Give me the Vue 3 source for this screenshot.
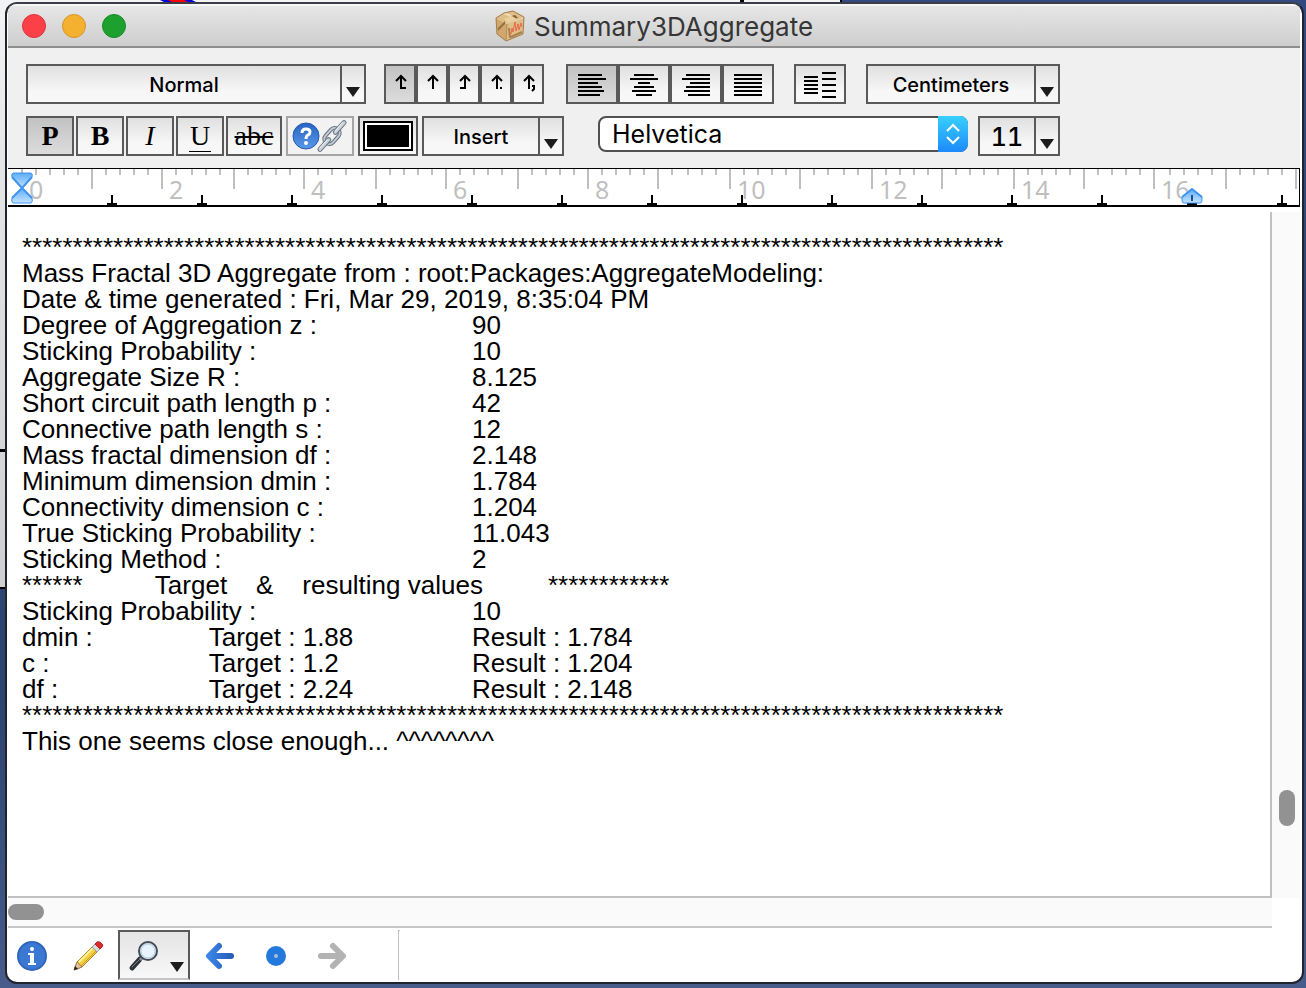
<script setup>
import { ref } from 'vue'

const stars = '*'.repeat(97)
const notes = ref([
  stars,
  'Mass Fractal 3D Aggregate from : root:Packages:AggregateModeling:',
  'Date & time generated : Fri, Mar 29, 2019, 8:35:04 PM',
  'Degree of Aggregation z :\t\t90',
  'Sticking Probability :\t\t\t10',
  'Aggregate Size R :\t\t\t8.125',
  'Short circuit path length p :\t\t42',
  'Connective path length s :\t\t12',
  'Mass fractal dimension df :\t\t2.148',
  'Minimum dimension dmin :\t\t1.784',
  'Connectivity dimension c :\t\t1.204',
  'True Sticking Probability :\t\t11.043',
  'Sticking Method :\t\t\t2',
  '******\t      Target    &    resulting values         ************',
  'Sticking Probability :\t\t\t10',
  'dmin :\t\t Target : 1.88\t\tResult : 1.784',
  'c :\t\t Target : 1.2\t\tResult : 1.204',
  'df :\t\t Target : 2.24\t\tResult : 2.148',
  stars,
  'This one seems close enough... ^^^^^^^^'
].join('\n'))

const tabKinds = [
  { name: 'Left tab', extra: 'M15 22H20' },
  { name: 'Center tab', extra: '' },
  { name: 'Right tab', extra: 'M15 22H10' },
  { name: 'Decimal tab', extra: 'M18 22H20' },
  { name: 'Comma tab', extra: 'M18 20H20V23L18 25' }
]

const alignments = [
  { name: 'Align left', lines: [[10, 24], [10, 28], [10, 20], [10, 24], [10, 26], [10, 22]] },
  { name: 'Align center', lines: [[14, 20], [10, 28], [18, 12], [14, 20], [12, 24], [16, 16]] },
  { name: 'Align right', lines: [[14, 24], [10, 28], [18, 20], [14, 24], [12, 26], [16, 22]] },
  { name: 'Justify', lines: [[10, 28], [10, 28], [10, 28], [10, 28], [10, 28], [10, 28]] }
]

const scale = Array.from({ length: 91 }, (_, i) => ({
  x: 13 + 2 * Math.floor((i * 14.173) / 2),
  major: i % 5 === 0,
  label: i % 10 === 0 && i <= 80 ? String(i / 5) : ''
}))
const stops = Array.from({ length: 14 }, (_, i) => 104 + i * 90)
</script>

<template>
  <div class="desktop">
    <div class="behind" aria-hidden="true">
      <svg class="curve" viewBox="0 0 40 3" width="40" height="3">
        <path d="M2 0H34L40 3H8Z" fill="#00d" /><path d="M10 0H26L32 3H16Z" fill="#f00" />
      </svg>
      <i class="axis"></i><i class="tick"></i>
    </div>
    <main class="window">
      <header class="titlebar">
        <div class="lights">
          <button class="light red" aria-label="Close"></button>
          <button class="light amber" aria-label="Minimize"></button>
          <button class="light green" aria-label="Zoom window"></button>
        </div>
        <svg class="box-icon" viewBox="0 0 30 32" width="30" height="32" aria-hidden="true">
          <path d="M1 8L12 14L11 31L2 24Z" fill="#d0a76c" />
          <path d="M12 14L29 8L28 24L11 31Z" fill="#dfbd85" />
          <path d="M1 8L9 3L18 1L29 7L12 14Z" fill="#e0bd86" />
          <path d="M8 4L18 8L21 7L11 3Z" fill="#f0dcb2" />
          <path d="M16 6L20 5L23 8L18 9Z" fill="#84603a" />
          <path d="M9 9L17 6L22 9L13 13Z" fill="#ecd09c" />
          <path d="M3 18L10 11V14L3 21Z" fill="#94703f" />
          <path d="M14 18L15 28M16 27L27 22" fill="none" stroke="#a8814f" stroke-width="2" />
          <path d="M16 24L17 18L18 22L20 12L21 21L23 14L24 20L26 13L27 17" fill="none" stroke="#e8694a" stroke-width="1" />
          <path d="M1 8L2 24L11 31L28 24L29 7L18 1L9 3Z" fill="none" stroke="#a17c4b" stroke-width="1" />
          <path d="M12 14L11 31" fill="none" stroke="#b28b55" stroke-width="1" />
        </svg>
        <h1>Summary3DAggregate</h1>
      </header>

      <section class="toolbar" aria-label="Formatting">
        <div class="row">
          <div class="combo style-combo">
            <select aria-label="Ruler style"><option>Normal</option></select>
            <span class="drop"></span>
          </div>
          <div class="group">
            <button v-for="(t, i) in tabKinds" :key="t.name" class="tool narrow" :class="{ on: i === 0 }" :aria-label="t.name">
              <svg viewBox="0 0 28 36" width="28" height="36">
                <path d="M15 11V23M10 15L15 10L20 15" />
                <path v-if="t.extra" :d="t.extra" />
              </svg>
            </button>
          </div>
          <div class="group">
            <button v-for="(a, i) in alignments" :key="a.name" class="tool wide" :class="{ on: i === 0 }" :aria-label="a.name">
              <svg viewBox="0 0 48 36" width="48" height="36">
                <rect v-for="(l, n) in a.lines" :key="n" :x="l[0]" :y="8 + n * 4" :width="l[1]" height="2" />
              </svg>
            </button>
          </div>
          <button class="tool wide columns" aria-label="Line spacing">
            <svg viewBox="0 0 48 36" width="48" height="36">
              <rect v-for="n in 5" :key="'a' + n" x="8" :y="6 + n * 4" width="14" height="2" />
              <rect v-for="n in 5" :key="'b' + n" x="26" :y="n * 6" width="14" height="2" />
            </svg>
          </button>
          <div class="combo unit-combo">
            <select aria-label="Ruler units"><option>Centimeters</option></select>
            <span class="drop"></span>
          </div>
        </div>

        <div class="row">
          <div class="letters">
            <button class="tool glyph on" aria-label="Plain"><b>P</b></button>
            <button class="tool glyph" aria-label="Bold"><b>B</b></button>
            <button class="tool glyph" aria-label="Italic"><i>I</i></button>
            <button class="tool glyph" aria-label="Underline"><span class="under">U</span></button>
            <button class="tool glyph strike" aria-label="Strikethrough"><s>abc</s></button>
          </div>
          <button class="tool link" aria-label="Help link">
            <svg viewBox="0 0 64 36" width="64" height="36">
              <defs>
                <linearGradient id="helpBlue" x1="0" y1="0" x2="0" y2="1">
                  <stop offset="0" stop-color="#2763c2" /><stop offset="1" stop-color="#5a9ae8" />
                </linearGradient>
              </defs>
              <circle cx="18" cy="18" r="13" fill="url(#helpBlue)" stroke="#2558ae" stroke-width="1" />
              <path d="M14 15Q14 11 18 11Q22 11 22 14Q22 16 20 17Q18 18 18 21" fill="none" stroke="#fff" stroke-width="3" />
              <circle cx="18" cy="25" r="2" fill="#fff" />
              <g transform="rotate(-48 44 18)" fill="none" stroke-linecap="round">
                <rect x="35" y="13" width="18" height="10" rx="5" stroke="#687482" stroke-width="4" />
                <rect x="35" y="13" width="18" height="10" rx="5" stroke="#c3cbd4" stroke-width="2" />
                <path d="M26 18H39M49 18H62" stroke="#687482" stroke-width="5" />
                <path d="M26 18H39M49 18H62" stroke="#c8d0d8" stroke-width="3" />
                <path d="M27 17H38M50 17H61" stroke="#eef1f4" stroke-width="1" />
              </g>
            </svg>
          </button>
          <button class="tool colour" aria-label="Text color"><span class="swatch"></span></button>
          <button class="tool insert" aria-haspopup="menu">Insert<span class="drop"></span></button>
          <div class="font-combo">
            <select aria-label="Font"><option>Helvetica</option></select>
            <span class="stepper">
              <svg viewBox="0 0 30 36" width="30" height="36"><path d="M9 15L15 9L21 15M9 21L15 27L21 21" /></svg>
            </span>
          </div>
          <div class="combo size-combo">
            <select aria-label="Font size"><option>11</option></select>
            <span class="drop"></span>
          </div>
        </div>
      </section>

      <div class="ruler">
        <svg width="100%" height="36" aria-label="Ruler">
          <defs>
            <linearGradient id="marker" x1="0" y1="0" x2="0" y2="1">
              <stop offset="0" stop-color="#5badf8" /><stop offset="1" stop-color="#c4e3ff" />
            </linearGradient>
          </defs>
          <g v-for="t in scale" :key="t.x">
            <rect :x="t.x" y="0" width="2" :height="t.major ? 20 : 6" fill="#bfbfbf" />
            <text v-if="t.label" :x="t.x + 8" y="30">{{ t.label }}</text>
          </g>
          <path v-for="s in stops" :key="s" :d="`M${s - 1} 26h2v8h4v2h-10v-2h4z`" />
          <path d="M5 4H23Q25 5 24 8L14 19L4 8Q3 5 5 4Z" fill="url(#marker)" stroke="#3f95ee" stroke-width="1" />
          <path d="M14 19L24 29Q25 33 23 34H5Q3 33 4 29Z" fill="url(#marker)" stroke="#3f95ee" stroke-width="1" />
          <path d="M4 8L14 19L24 8M4 29L14 19L24 29" fill="none" stroke="#3f95ee" stroke-width="2" />
          <path d="M1184 20L1194 28V31Q1194 34 1192 34H1176Q1174 34 1174 31V28Z" fill="url(#marker)" stroke="#3f95ee" stroke-width="1" />
          <path d="M1174 28L1184 20L1194 28" fill="none" stroke="#3f95ee" stroke-width="2" />
          <path d="M1183 26h2v6h-2z" fill="#1e4f86" />
        </svg>
      </div>

      <div class="body">
        <textarea v-model="notes" aria-label="Notebook text" wrap="off" spellcheck="false"></textarea>
        <div class="vbar"><span></span></div>
      </div>
      <div class="hbar"><span></span></div>

      <footer class="status">
        <button class="flat info" aria-label="Information">
          <svg viewBox="0 0 32 32" width="32" height="32">
            <circle cx="16" cy="16" r="14" fill="#3b78d4" stroke="#2f66bd" stroke-width="2" />
            <circle cx="16" cy="9" r="2" fill="#fff" />
            <path d="M12 13H18V23H20V25H12V23H14V15H12Z" fill="#fff" />
          </svg>
        </button>
        <button class="flat pencil" aria-label="Edit">
          <svg viewBox="0 0 32 32" width="32" height="32">
            <path d="M2 30L5 22L22 5L27 10L10 27Z" fill="#f5cf3f" stroke="#a5832c" stroke-width="1" />
            <path d="M7 22L23 6" stroke="#fff19a" stroke-width="2" />
            <path d="M9 26L26 9" stroke="#cf9d20" stroke-width="1" />
            <path d="M2 30L5 22L10 27Z" fill="#e5c199" stroke="#9d8060" stroke-width="1" />
            <path d="M2 30L3 26L6 29Z" fill="#222" />
            <path d="M20 7L23 4L28 9L25 12Z" fill="#d6d9dc" stroke="#9b9ea1" stroke-width="1" />
            <path d="M23 4L25 2Q27 1 29 3Q32 5 30 7L28 9Z" fill="#da2b2b" stroke="#b82020" stroke-width="1" />
          </svg>
        </button>
        <button class="find" aria-label="Find">
          <svg viewBox="0 0 32 32" width="32" height="32">
            <path d="M4 28L12 19" stroke="#2d3239" stroke-width="5" stroke-linecap="round" />
            <path d="M4 27L11 20" stroke="#808891" stroke-width="1" stroke-linecap="round" />
            <path d="M12 20L15 17" stroke="#888f98" stroke-width="3" />
            <circle cx="20" cy="11" r="9" fill="#d8ebfb" stroke="#454b55" stroke-width="2" />
            <circle cx="20" cy="11" r="7" fill="#e7f4ff" stroke="#b7cbdc" stroke-width="1" />
          </svg>
          <span class="tri"></span>
        </button>
        <button class="flat back" aria-label="Back">
          <svg viewBox="0 0 32 32" width="32" height="32">
            <defs>
              <linearGradient id="backBlue" x1="0" y1="0" x2="32" y2="0" gradientUnits="userSpaceOnUse">
                <stop offset="0" stop-color="#3f8cf0" /><stop offset="1" stop-color="#2357b0" />
              </linearGradient>
            </defs>
            <path d="M27 16H6M15 6L5 16L15 26" stroke="url(#backBlue)" />
          </svg>
        </button>
        <button class="flat dot" aria-label="Current location">
          <svg viewBox="0 0 32 32" width="32" height="32"><circle cx="16" cy="16" r="10" fill="#2379dc" /><circle cx="16" cy="16" r="2" fill="#a5bdd8" /></svg>
        </button>
        <button class="flat forward" aria-label="Forward" disabled>
          <svg viewBox="0 0 32 32" width="32" height="32"><path d="M5 16H26M17 6L27 16L17 26" stroke="#b3b3b3" /></svg>
        </button>
        <span class="divider"></span>
      </footer>
    </main>
  </div>
</template>

<style>
body { margin: 0; }
</style>

<style scoped>
* { box-sizing: border-box; }
.desktop {
  position: relative;
  display: flex;
  height: 100vh;
  padding: 2px 2px 4px 5px;
  overflow: hidden;
  background: linear-gradient(#324a80, #2e426f 70%, #485c8b);
  font-family: Inter, "Liberation Sans", sans-serif;
}
.behind {
  position: absolute;
  inset: 0 auto auto 0;
  width: 842px;
  height: 589px;
  background: linear-gradient(#f3f3f5, #e4e4e4 30%, #cfcfcf);
  border: solid #000;
  border-width: 0 2px 2px 0;
}
.behind i, .curve { position: absolute; }
.behind i { background: #000; }
.curve { left: 158px; top: 0; }
.behind .axis { left: 740px; top: 0; width: 4px; height: 4px; }
.behind .tick { left: 0; top: 449px; width: 6px; height: 3px; }
.window {
  position: relative;
  display: flex;
  flex: 1;
  flex-direction: column;
  min-width: 0;
  padding: 0 2px 0 1px;
  overflow: hidden;
  background: #fff;
  border: 2px solid #20242e;
  border-top-color: #3b3e46;
  border-radius: 12px;
}
button, select { font-family: inherit; color: #000; }
.titlebar {
  display: flex;
  position: relative;
  align-items: center;
  justify-content: center;
  gap: 9px;
  height: 44px;
  background: linear-gradient(#e6e6e6, #cecece);
  border-top: 2px solid #f6f6f6;
  border-bottom: 2px solid #8e8e8e;
}
.titlebar h1 { margin: 0; padding-top: 2px; font-size: 26px; line-height: 38px; font-weight: 400; color: #363636; }
.lights { position: absolute; left: 14px; top: 8px; display: flex; gap: 16px; }
.light { width: 24px; height: 24px; padding: 0; border: 1px solid; border-radius: 50%; }
.red { background: #fc4047; border-color: #dc3239; }
.amber { background: #f4b02f; border-color: #d6952a; }
.green { background: #1ea02f; border-color: #178a27; }

.toolbar { display: flex; flex-direction: column; gap: 12px; padding: 16px 18px 12px; background: #f0f0f0; }
.row, .group, .letters { display: flex; }
.row { height: 40px; }
.group, .columns, .unit-combo { margin-left: 20px; }
.style-combo + .group { margin-left: 18px; }
.style-combo + .group + .group { margin-left: 22px; }
.letters { gap: 2px; }
.tool {
  display: flex;
  align-items: center;
  justify-content: center;
  height: 40px;
  padding: 0;
  border: 2px solid #595959;
  background: linear-gradient(#e0e0e0, #f7f7f7 70%);
}
.tool.on { background: linear-gradient(#c2c2c2, #dcdcdc); }
.narrow { width: 32px; }
.narrow path { fill: none; stroke: #000; stroke-width: 2; }
.wide { width: 52px; }
.glyph { width: 48px; font: 28px/36px "Liberation Serif", serif; }
.glyph.strike { width: 56px; }
.glyph s { text-decoration-thickness: 2px; }
.under { height: 31px; line-height: 30px; padding: 0 1px; border-bottom: 1px solid #000; }
.link { width: 68px; margin-left: 4px; border-color: #a5a5a5; background: #f2f2f2; }
.colour { width: 60px; margin-left: 4px; }
.swatch { width: 50px; height: 30px; border: 2px solid #000; background: #000; box-shadow: inset 0 0 0 2px #fff; }
.insert { position: relative; width: 142px; margin-left: 4px; padding: 2px 24px 0 0; font-size: 20px; font-weight: 500; }
.combo { position: relative; height: 40px; }
.combo select {
  appearance: none;
  width: 100%;
  height: 40px;
  padding: 2px 24px 0 0;
  border: 2px solid #595959;
  border-radius: 0;
  background: linear-gradient(#e0e0e0, #f7f7f7 70%);
  font-size: 20px;
  font-weight: 500;
  text-align: center;
  text-align-last: center;
}
.style-combo { width: 340px; }
.unit-combo { width: 194px; }
.size-combo { width: 82px; margin-left: 10px; }
.combo.size-combo select { font-size: 25px; font-variant-numeric: tabular-nums; }
.drop { position: absolute; right: 2px; top: 2px; bottom: 2px; width: 24px; border-left: 2px solid #595959; pointer-events: none; }
.insert .drop { right: 0; top: 0; bottom: 0; }
.drop::after, .tri {
  content: "";
  position: absolute;
  left: 4px;
  bottom: 5px;
  width: 14px;
  height: 10px;
  background: #1c1c1c;
  clip-path: polygon(0 0, 100% 0, 50% 100%);
}
.font-combo { position: relative; width: 370px; height: 36px; margin-left: 34px; }
.font-combo select {
  appearance: none;
  width: 100%;
  height: 36px;
  padding: 0 36px 0 12px;
  border: 2px solid #505050;
  border-radius: 8px;
  background: #fff;
  font-size: 25px;
}
.stepper {
  position: absolute;
  inset: 0 0 0 auto;
  width: 30px;
  border-radius: 0 8px 8px 0;
  background: linear-gradient(#37d0fb, #1d8afb);
  pointer-events: none;
}
.stepper path { fill: none; stroke: #fff; stroke-width: 2; }

.ruler { display: flex; flex: none; height: 39px; background: #fff; border: solid #000; border-width: 1px 1px 2px 0; }
.ruler svg { display: block; overflow: visible; }
.ruler text { font: 25px "Noto Sans", sans-serif; fill: #bfbfbf; }

.body { display: flex; flex: 1; min-height: 0; padding-top: 5px; }
textarea {
  flex: 1;
  min-width: 0;
  margin: 0;
  padding: 22px 14px 0;
  overflow: hidden;
  resize: none;
  outline: none;
  border: solid #c1c1c1;
  border-width: 0 2px 2px 0;
  border-radius: 0;
  color: #000;
  font: 26px/26px "Liberation Sans", sans-serif;
  white-space: pre;
  tab-size: 90px;
}
.vbar { display: flex; width: 28px; align-items: flex-end; padding: 0 0 72px 7px; background: #fafafa; }
.vbar span { width: 16px; height: 36px; border-radius: 8px; background: #929292; }
.hbar { display: flex; align-items: center; height: 30px; margin-right: 28px; background: #fafafa; border-bottom: 2px solid #c6c6c6; }
.hbar span { width: 36px; height: 16px; border-radius: 8px; background: #929292; }

.status { display: flex; flex: none; height: 54px; padding: 2px 0 2px 8px; }
.flat { display: flex; align-items: center; justify-content: center; width: 32px; padding: 2px 0 0; border: 0; background: none; }
.flat path { stroke-linejoin: round; }
.back path, .forward path { fill: none; stroke-width: 6; stroke-linecap: round; }
.pencil { margin-left: 24px; }
.find {
  position: relative;
  display: flex;
  align-items: center;
  width: 72px;
  margin: 0 14px;
  padding: 2px 0 0 8px;
  border: 2px solid #595959;
  border-bottom-color: #c4c4c4;
  background: linear-gradient(#e4e4e4, #f8f8f8);
}
.tri { left: 50px; bottom: 6px; }
.dot, .forward { margin-left: 24px; }
.divider { width: 2px; margin-left: 50px; border: solid #c1c1c1; border-width: 1px 0 0 1px; }
</style>
